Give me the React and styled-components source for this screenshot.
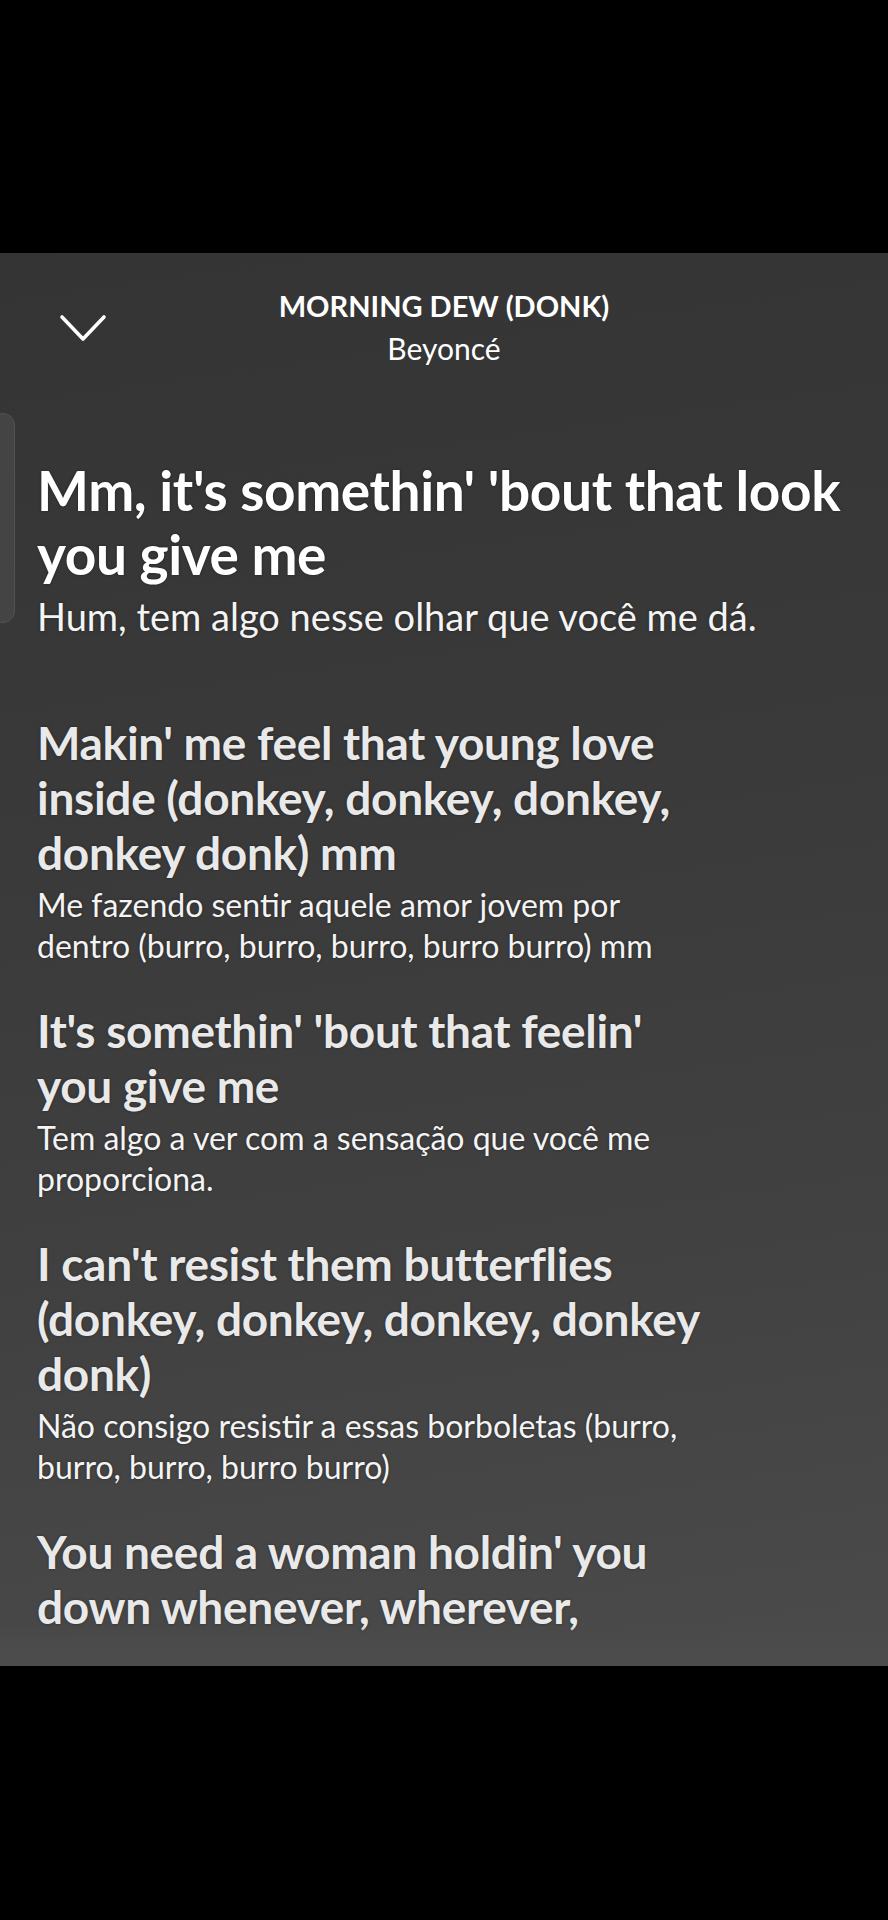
import React from "react";
import styled, { createGlobalStyle } from "styled-components";

const GlobalStyle = createGlobalStyle`
  html, body {
    margin: 0;
    padding: 0;
    background: #000;
  }
  * {
    box-sizing: border-box;
  }
`;

const Screen = styled.div`
  width: 888px;
  height: 1920px;
  padding-top: 253px;
  background: #000;
  font-family: Lato, "Noto Sans", sans-serif;
`;

const Panel = styled.div`
  position: relative;
  height: 1413px;
  overflow: hidden;
  background: linear-gradient(172deg, #343434 0%, #3a3a3a 40%, #414141 70%, #4b4b4b 100%);
`;

const Header = styled.div`
  display: grid;
  grid-template-columns: 1fr auto 1fr;
  align-items: center;
  padding-top: 37px;
`;

const BackButton = styled.div`
  display: flex;
  align-items: center;
  padding-left: 59px;
  color: #fff;
`;

const TitleBlock = styled.div`
  display: flex;
  flex-direction: column;
  align-items: center;
  color: #fff;
`;

const SongTitle = styled.div`
  font-size: 29px;
  line-height: 32px;
  font-weight: 700;
  margin-bottom: 9px;
`;

const Artist = styled.div`
  font-size: 30px;
  line-height: 34px;
  font-weight: 400;
`;

const Lyrics = styled.div`
  display: flex;
  flex-direction: column;
  padding: 93px 30px 0 37px;
`;

const Stanza = styled.div`
  display: flex;
  flex-direction: column;
  margin-bottom: ${(p) => (p.$active ? "77px" : "37px")};
`;

const Line = styled.div`
  white-space: nowrap;
  font-weight: 700;
  font-size: ${(p) => (p.$active ? "55px" : "46px")};
  line-height: ${(p) => (p.$active ? "64px" : "55px")};
  letter-spacing: ${(p) => (p.$active ? "-0.4px" : "-0.3px")};
  color: ${(p) => (p.$active ? "#ffffff" : "#e9e9e9")};
  text-shadow: 0 0 3px rgba(0, 0, 0, 0.4);
`;

const Translation = styled.div`
  margin-top: ${(p) => (p.$active ? "8px" : "4px")};
  white-space: nowrap;
  font-weight: 400;
  font-size: ${(p) => (p.$active ? "38px" : "32px")};
  line-height: ${(p) => (p.$active ? "44px" : "41px")};
  color: #f4f4f4;
  text-shadow: 0 0 3px rgba(0, 0, 0, 0.4);
`;

const ScrollTab = styled.div`
  position: absolute;
  left: -10px;
  top: 160px;
  width: 25px;
  height: 210px;
  border-radius: 12px;
  background: #444444;
  border: 1px solid #525252;
`;

const BottomFade = styled.div`
  position: absolute;
  left: 0;
  right: 0;
  bottom: 0;
  height: 40px;
  background: linear-gradient(180deg, rgba(75, 75, 75, 0) 0%, #4b4b4b 45%, #4d4d4d 100%);
`;

const stanzas = [
  {
    active: true,
    lines: ["Mm, it's somethin' 'bout that look", "you give me"],
    translation: ["Hum, tem algo nesse olhar que você me dá."],
  },
  {
    lines: [
      "Makin' me feel that young love",
      "inside (donkey, donkey, donkey,",
      "donkey donk) mm",
    ],
    translation: [
      "Me fazendo sentir aquele amor jovem por",
      "dentro (burro, burro, burro, burro burro) mm",
    ],
  },
  {
    lines: ["It's somethin' 'bout that feelin'", "you give me"],
    translation: ["Tem algo a ver com a sensação que você me", "proporciona."],
  },
  {
    lines: [
      "I can't resist them butterflies",
      "(donkey, donkey, donkey, donkey",
      "donk)",
    ],
    translation: [
      "Não consigo resistir a essas borboletas (burro,",
      "burro, burro, burro burro)",
    ],
  },
  {
    lines: [
      "You need a woman holdin' you",
      "down whenever, wherever,",
      "whatever you want",
    ],
    translation: [],
  },
];

const Chevron = () => (
  <svg width="48" height="30" viewBox="0 0 48 30" fill="none">
    <polyline
      points="3,4 24,26 45,4"
      stroke="#fff"
      strokeWidth="3.6"
      strokeLinecap="round"
      strokeLinejoin="round"
    />
  </svg>
);

export default function App() {
  return (
    <>
      <GlobalStyle />
      <Screen>
        <Panel>
          <Header>
            <BackButton>
              <Chevron />
            </BackButton>
            <TitleBlock>
              <SongTitle>MORNING DEW (DONK)</SongTitle>
              <Artist>Beyoncé</Artist>
            </TitleBlock>
            <div />
          </Header>
          <Lyrics>
            {stanzas.map((s, i) => (
              <Stanza key={i} $active={s.active}>
                {s.lines.map((l, j) => (
                  <Line key={j} $active={s.active}>
                    {l}
                  </Line>
                ))}
                {s.translation.length > 0 && (
                  <Translation $active={s.active}>
                    {s.translation.map((t, k) => (
                      <div key={k}>{t}</div>
                    ))}
                  </Translation>
                )}
              </Stanza>
            ))}
          </Lyrics>
          <ScrollTab />
          <BottomFade />
        </Panel>
      </Screen>
    </>
  );
}
